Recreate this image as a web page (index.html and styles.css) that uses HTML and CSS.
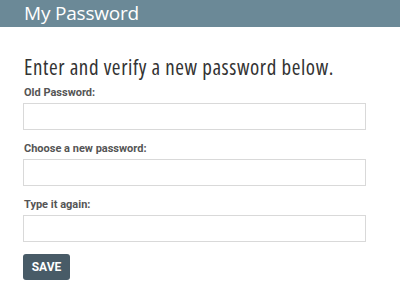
FILE: index.html
```html
<!DOCTYPE html>
<html lang="en">
<head>
    <meta charset="UTF-8">
    <meta name="viewport" content="width=device-width, initial-scale=1.0">
    <title>My Password</title>
    <link rel="stylesheet" href="styles.css">
</head>
<body>
    <div class="page-header">
        <h1>My Password</h1>
    </div>
    <div class="content">
        <h2>Enter and verify a new password below.</h2>
        <form>
            <div class="form-group">
                <label for="oldPassword">Old Password:</label>
                <input type="password" id="oldPassword">
            </div>
            <div class="form-group">
                <label for="newPassword">Choose a new password:</label>
                <input type="password" id="newPassword">
            </div>
            <div class="form-group">
                <label for="confirmPassword">Type it again:</label>
                <input type="password" id="confirmPassword">
            </div>
            <button type="submit" class="save-btn">SAVE</button>
        </form>
    </div>
</body>
</html>
```

FILE: styles.css
```css
body {
    margin: 0;
    font-family: Roboto, 'Liberation Sans', sans-serif;
    background: #ffffff;
}
.page-header {
    background: #6b8997;
    height: 27px;
    padding: 0 24px;
}
h1 {
    margin: 0;
    font-family: 'Open Sans', sans-serif;
    font-weight: 400;
    font-size: 19px;
    line-height: 27px;
    letter-spacing: -0.2px;
    color: #ffffff;
}
.content {
    padding: 0 34px 0 23px;
}
h2 {
    margin: 25px 0 3px 1px;
    font-family: 'Open Sans', sans-serif;
    font-weight: 400;
    font-stretch: 75%;
    font-size: 21px;
    line-height: 30px;
    letter-spacing: 0.6px;
    color: #333333;
    white-space: nowrap;
}
.form-group {
    margin-bottom: 11px;
}
label {
    display: block;
    font-weight: 700;
    font-size: 11px;
    line-height: 15px;
    color: #555555;
    margin: 0 0 3px 1px;
}
input {
    display: block;
    box-sizing: border-box;
    width: 100%;
    height: 27px;
    border: 1px solid #d9d9d9;
    padding: 4px 8px;
}
.save-btn {
    margin-top: 1px;
    width: 47px;
    height: 26px;
    border: none;
    border-radius: 3px;
    background: #485b67;
    color: #ffffff;
    font-family: Roboto, sans-serif;
    font-weight: 700;
    font-size: 12px;
    cursor: pointer;
}
```
